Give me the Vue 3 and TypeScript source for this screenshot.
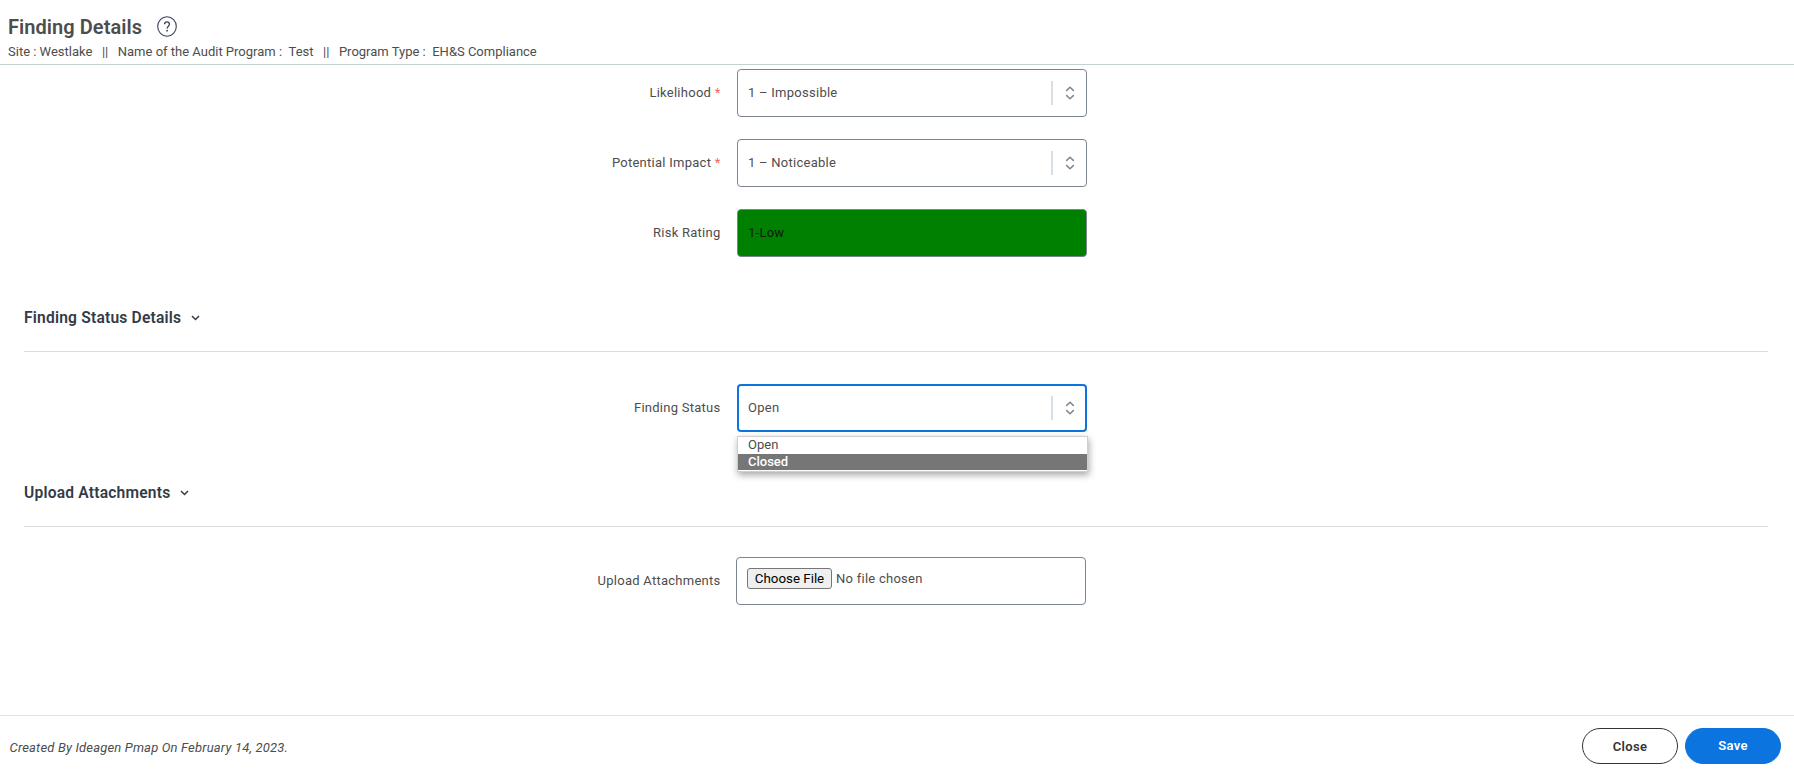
<script setup lang="ts">
import { ref } from 'vue'

interface Field {
  label: string
  value: string
  required?: boolean
  rating?: boolean
}

const fields: Field[] = [
  { label: 'Likelihood', value: '1 – Impossible', required: true },
  { label: 'Potential Impact', value: '1 – Noticeable', required: true },
  { label: 'Risk Rating', value: '1-Low', rating: true },
]

const statuses: string[] = ['Open', 'Closed']
const status = ref('Open')
const highlighted = ref('Closed')
</script>

<template>
  <div class="page">
    <header class="header">
      <div class="title-row">
        <h1 class="title">Finding Details</h1>
        <svg class="help" viewBox="0 0 20 21" width="20" height="21">
          <ellipse cx="10" cy="10.5" rx="9.3" ry="9.7" fill="none" stroke="#3a4256" stroke-width="1.1" />
          <path d="M7.6 8.3C7.6 6.8 8.6 5.9 10 5.9s2.4.9 2.4 2.3c0 1.9-2.3 2.1-2.3 4.3" fill="none" stroke="#3a4256" stroke-width="1.3" />
          <circle cx="10.1" cy="14.7" r=".9" fill="#3a4256" />
        </svg>
      </div>
      <div class="crumbs">
        <span class="c-site">Site : Westlake</span><span class="bars b1">||</span>
        <span class="c-name">Name of the Audit Program :</span><span class="c-test">Test</span><span class="bars b2">||</span>
        <span class="c-type">Program Type :</span><span class="c-comp">EH&amp;S Compliance</span>
      </div>
    </header>

    <main class="main">
      <div v-for="f in fields" :key="f.label" class="row">
        <label class="label">{{ f.label }}<span v-if="f.required" class="req"> *</span></label>
        <div class="control" :class="{ rating: f.rating }">
          <span class="value">{{ f.value }}</span>
          <span v-if="!f.rating" class="sep"></span>
          <svg v-if="!f.rating" class="arrows" viewBox="0 0 10 14" width="10" height="14">
            <path d="M1.2 4.9 5 1.3l3.8 3.6M1.2 9.1 5 12.7l3.8-3.6" />
          </svg>
        </div>
      </div>

      <section class="section">
        <h2 class="heading">Finding Status Details
          <svg class="chev" viewBox="0 0 9 6" width="9" height="6"><path d="M1 1l3.5 3.5L8 1" /></svg>
        </h2>
      </section>
      <div class="row status">
        <label class="label">Finding Status</label>
        <div class="control focused">
          <span class="value">{{ status }}</span>
          <span class="sep"></span>
          <svg class="arrows" viewBox="0 0 10 14" width="10" height="14">
            <path d="M1.2 4.9 5 1.3l3.8 3.6M1.2 9.1 5 12.7l3.8-3.6" />
          </svg>
          <ul class="menu">
            <li v-for="s in statuses" :key="s" :class="{ active: s === highlighted }" @mouseenter="highlighted = s" @click="status = s">{{ s }}</li>
          </ul>
        </div>
      </div>

      <section class="section">
        <h2 class="heading">Upload Attachments
          <svg class="chev" viewBox="0 0 9 6" width="9" height="6"><path d="M1 1l3.5 3.5L8 1" /></svg>
        </h2>
      </section>
      <div class="row upload">
        <label class="label">Upload Attachments</label>
        <div class="control file">
          <button class="choose" type="button">Choose File</button>
          <span class="nofile">No file chosen</span>
        </div>
      </div>
    </main>

    <footer class="footer">
      <em class="created">Created By Ideagen Pmap On February 14, 2023.</em>
      <div class="actions">
        <button class="btn close" type="button">Close</button>
        <button class="btn save" type="button">Save</button>
      </div>
    </footer>
  </div>
</template>

<style>
body {
  margin: 0;
  background: #fff;
}
</style>

<style scoped>
* {
  box-sizing: border-box;
}
.page {
  display: flex;
  flex-direction: column;
  width: 100%;
  height: 769px;
  overflow: hidden;
  font-family: Roboto, "Liberation Sans", sans-serif;
  font-size: 13px;
  letter-spacing: 0.26px;
  color: #4d4d4d;
}
.header {
  flex: none;
  height: 65px;
  padding: 15px 8px 0;
  border-bottom: 1px solid #c5d0d3;
}
.title-row {
  display: flex;
  align-items: center;
  gap: 15px;
  height: 24px;
}
.title {
  margin: 0;
  font-size: 20px;
  line-height: 24px;
  font-weight: 600;
  letter-spacing: 0.05px;
}
.help {
  position: relative;
  top: -1px;
}
.crumbs {
  display: flex;
  height: 16px;
  margin-top: 4px;
  line-height: 17px;
  letter-spacing: 0;
  white-space: nowrap;
}
.bars {
  margin: 0 9.5px;
}
.c-test,
.c-comp {
  margin-left: 6.5px;
}
.main {
  flex: 1;
  padding: 4px 0 0;
}
.row {
  display: flex;
  align-items: center;
  height: 48px;
  margin-bottom: 22px;
}
.label {
  flex: none;
  width: 720.5px;
  margin-right: 16.5px;
  padding-bottom: 2px;
  text-align: right;
  white-space: pre;
}
.req {
  color: #f4685c;
}
.control {
  position: relative;
  display: flex;
  align-items: center;
  width: 350px;
  height: 48px;
  padding: 0 11px 0 10px;
  border: 1px solid #7b8490;
  border-radius: 4px;
}
.value {
  flex: 1;
  padding-bottom: 2px;
}
.rating {
  background: #008000;
  color: #101a10;
}
.sep {
  width: 2px;
  height: 24px;
  margin-right: 12px;
  background: #d8dfe4;
}
.arrows {
  fill: none;
  stroke: #858585;
  stroke-width: 1.5;
}
.focused {
  border: 2px solid #0b74de;
  padding: 0 10px 0 9px;
}
.menu {
  position: absolute;
  z-index: 2;
  top: 50px;
  left: -2px;
  width: 351px;
  height: 36px;
  margin: 0;
  padding: 0;
  border: 1px solid #cfcfcf;
  background: #fff;
  box-shadow: 1px 3px 7px rgba(0, 0, 0, 0.35);
  list-style: none;
  letter-spacing: 0;
}
.menu li {
  height: 17px;
  padding-left: 10px;
  line-height: 15px;
}
.menu .active {
  height: 16px;
  background: #767676;
  color: #fff;
  font-weight: 500;
  line-height: 16px;
}
.section {
  display: flex;
  align-items: flex-end;
  height: 73px;
  margin: 0 26px 0 24px;
  padding-bottom: 23px;
  border-bottom: 1px solid #dcdcdc;
}
.heading {
  display: flex;
  align-items: center;
  gap: 9.5px;
  margin: 0;
  font-size: 15.6px;
  line-height: 20px;
  font-weight: 600;
  letter-spacing: 0.2px;
  color: #333b49;
}
.chev {
  fill: none;
  stroke: #333b49;
  stroke-width: 1.5;
}
.status {
  margin-top: 32px;
}
.upload {
  margin-top: 30px;
}
.upload .label {
  margin-right: 15.5px;
}
.file {
  align-items: flex-start;
  padding: 10px 10px 0;
}
.choose {
  width: 85px;
  height: 21px;
  margin: 0 4px 0 0;
  padding: 0;
  border: 1px solid #767676;
  border-radius: 3px;
  background: #efefef;
  color: #000;
  font: inherit;
  font-size: 13.33px;
  letter-spacing: 0;
}
.nofile {
  line-height: 21px;
}
.footer {
  flex: none;
  display: flex;
  justify-content: space-between;
  height: 54px;
  padding: 12px 13px 0 9.5px;
  border-top: 1px solid #e2e2e2;
}
.created {
  line-height: 40px;
  letter-spacing: 0.17px;
}
.actions {
  display: flex;
  gap: 7px;
}
.btn {
  width: 96px;
  height: 36px;
  padding: 0;
  border: 1px solid #333;
  border-radius: 18px;
  background: #fff;
  color: #333;
  font: 600 13px Roboto, "Liberation Sans", sans-serif;
  letter-spacing: 0.3px;
}
.save {
  padding-bottom: 2px;
  border-color: #0b74de;
  background: #0b74de;
  color: #fff;
}
</style>
